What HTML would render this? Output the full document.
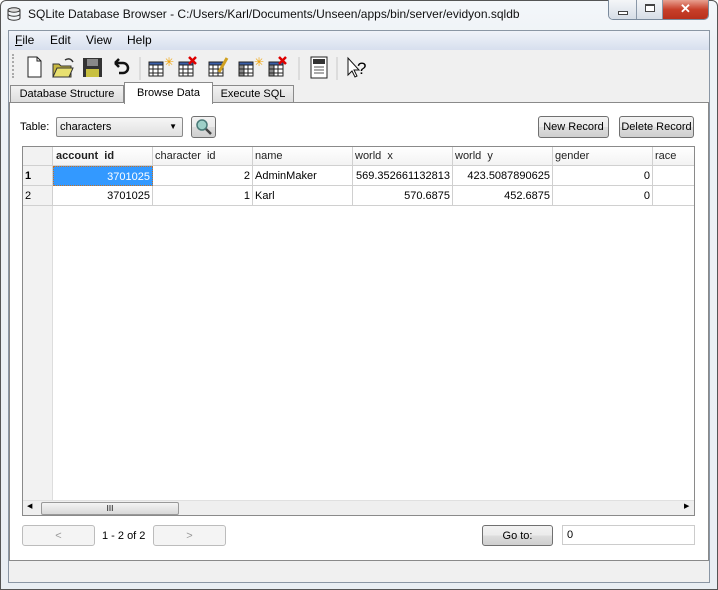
<!DOCTYPE html>
<html><head><style>
*{box-sizing:border-box;margin:0;padding:0}
body{width:718px;height:590px;overflow:hidden;font-family:"Liberation Sans",sans-serif;font-size:12px;color:#000;background:#fff;position:relative}
.abs{position:absolute}
.frame{left:0;top:0;width:718px;height:590px;background:linear-gradient(#f4f7fa,#eef2f6 40px,#e9eef3);border:1px solid #555;border-radius:6px 6px 0 0}
.btn{position:absolute;border:1px solid #707070;border-radius:3px;background:linear-gradient(#f2f2f2,#ebebeb 50%,#dddddd 51%,#cfcfcf);text-align:center;font-size:11px;line-height:20px}
.dis{border-color:#bcbcbc;background:#f4f4f4;color:#999}
.cell{position:absolute;height:20px;line-height:20px;font-size:11px;border-right:1px solid #d0d0d0;border-bottom:1px solid #d0d0d0;padding:0 2px;white-space:pre;overflow:hidden}
.hd{background:linear-gradient(#fff,#f3f3f3);color:#222;line-height:19px;height:19px}
.r{text-align:right}
</style></head><body>
<div class="abs frame"></div>
<div class="abs" style="left:7px;top:7px;width:14px;height:14px">
<svg width="14" height="14"><ellipse cx="7" cy="3" rx="6" ry="2.2" fill="#ddd" stroke="#333"/><path d="M1 3v8c0 1.2 2.7 2.2 6 2.2s6-1 6-2.2V3M1 7c0 1.2 2.7 2.2 6 2.2s6-1 6-2.2" fill="none" stroke="#333"/></svg></div>
<div class="abs" style="left:28px;top:7px;font-size:12px;color:#111">SQLite Database Browser - C:/Users/Karl/Documents/Unseen/apps/bin/server/evidyon.sqldb</div>
<div class="abs" style="left:608px;top:0;width:101px;height:20px;border:1px solid #7a8a9c;border-top:none;border-radius:0 0 5px 5px;overflow:hidden;display:flex">
<div style="width:28px;background:linear-gradient(#f4f6f8,#d6dde6);border-right:1px solid #8a98a8;position:relative"><div class="abs" style="left:9px;top:11px;width:10px;height:4px;border:1px solid #444;background:#fff"></div></div>
<div style="width:26px;background:linear-gradient(#f4f6f8,#d6dde6);border-right:1px solid #8a98a8;position:relative"><div class="abs" style="left:8px;top:4px;width:10px;height:8px;border:1px solid #444;border-top-width:2px;background:#fff"></div></div>
<div style="flex:1;background:linear-gradient(#e8a090,#c8402a 50%,#b8301c);color:#fff;font-weight:bold;text-align:center;font-size:13px;line-height:18px">✕</div></div>
<div class="abs" style="left:8px;top:30px;width:702px;height:553px;background:#f0f0f0;border:1px solid #8a96a4"></div>
<div class="abs" style="left:9px;top:31px;width:700px;height:19px;background:linear-gradient(#f0f3f9,#d7dfee);font-size:12px;line-height:19px">
<span style="position:absolute;left:6px"><u>F</u>ile</span><span style="position:absolute;left:41px">Edit</span><span style="position:absolute;left:77px">View</span><span style="position:absolute;left:118px">Help</span></div>
<div class="abs" style="left:9px;top:50px;width:700px;height:33px;background:#f0f0f0">
<div class="abs" style="left:3px;top:4px;width:2px;height:24px;border-left:2px dotted #aaa"></div>
<svg class="abs" style="left:14px;top:4px" width="360" height="26">
<path d="M5 3h9l4 4v16H5z" fill="#fff" stroke="#222"/><path d="M14 3v4h4" fill="none" stroke="#222"/>
<path d="M30 10h6l2 2h10v11H30z" fill="#c8b840" stroke="#333"/><path d="M30 23l4-9h16l-4 9z" fill="#e8e070" stroke="#333"/><path d="M42 6q5-3 8 2" fill="none" stroke="#333" stroke-width="1.5"/>
<rect x="60" y="4" width="19" height="19" fill="#333"/><rect x="64" y="5" width="11" height="7" fill="#888"/><rect x="63" y="15" width="13" height="8" fill="#c8c040"/>
<path d="M92 9h8a5 5 0 010 10h-4M92 9l4-4M92 9l4 4" fill="none" stroke="#111" stroke-width="2.5"/>
<g transform="translate(124,0)" fill="none" stroke="#222"><rect x="2" y="8" width="14" height="14" fill="#fff"/><path d="M2 11h14M2 15h14M2 19h14M6 8v14M11 8v14"/><rect x="2" y="8" width="14" height="3" fill="#3a5fa8"/></g>
<text x="141" y="12" font-size="12" fill="#f0a000" font-family="Liberation Sans">✳</text>
<g transform="translate(154,0)" fill="none" stroke="#222"><rect x="2" y="8" width="14" height="14" fill="#fff"/><path d="M2 15h14M2 19h14M6 8v14M11 8v14"/><rect x="2" y="8" width="14" height="3" fill="#3a5fa8"/><path d="M12 3l7 7M19 3l-7 7" stroke="#d00" stroke-width="2.5"/></g>
<g transform="translate(184,0)" fill="none" stroke="#222"><rect x="2" y="8" width="14" height="14" fill="#fff"/><path d="M2 15h14M2 19h14M6 8v14M11 8v14"/><rect x="2" y="8" width="14" height="3" fill="#3a5fa8"/><path d="M12 18l8-14" stroke="#d0a020" stroke-width="3"/></g>
<g transform="translate(214,0)" fill="none" stroke="#222"><rect x="2" y="8" width="14" height="14" fill="#fff"/><rect x="2" y="8" width="5" height="14" fill="#888"/><path d="M2 15h14M2 19h14M11 8v14"/><rect x="2" y="8" width="14" height="3" fill="#3a5fa8"/></g>
<text x="231" y="12" font-size="12" fill="#f0a000" font-family="Liberation Sans">✳</text>
<g transform="translate(244,0)" fill="none" stroke="#222"><rect x="2" y="8" width="14" height="14" fill="#fff"/><rect x="2" y="8" width="5" height="14" fill="#888"/><path d="M2 15h14M2 19h14M11 8v14"/><rect x="2" y="8" width="14" height="3" fill="#3a5fa8"/><path d="M12 3l7 7M19 3l-7 7" stroke="#d00" stroke-width="2.5"/></g>
<path d="M117 3v24M276 3v24M314 3v24" stroke="#c8c8c8"/>
<rect x="288" y="3" width="16" height="21" fill="#fff" stroke="#222"/><rect x="290" y="5" width="12" height="5" fill="#333"/><path d="M291 13h10M291 16h10M291 19h10" stroke="#555"/>
<path d="M325 4v17l4-4 3 6 2-1-3-6h5z" fill="#fff" stroke="#111"/><text x="334" y="20" font-size="17" font-family="Liberation Sans">?</text>
</svg></div>
<div class="abs" style="left:10px;top:85px;width:114px;height:18px;border:1px solid #8a8a8a;border-bottom:none;background:linear-gradient(#f2f2f2,#dcdcdc);font-size:11px;line-height:17px;text-align:center">Database Structure</div>
<div class="abs" style="left:212px;top:85px;width:82px;height:18px;border:1px solid #8a8a8a;border-bottom:none;background:linear-gradient(#f2f2f2,#dcdcdc);font-size:11px;line-height:17px;text-align:center">Execute SQL</div>
<div class="abs" style="left:9px;top:102px;width:700px;height:459px;background:#fff;border:1px solid #8a8a8a"></div>
<div class="abs" style="left:124px;top:82px;width:89px;height:22px;border:1px solid #8a8a8a;border-bottom:none;background:#fff;font-size:11px;line-height:20px;text-align:center">Browse Data</div>
<div class="abs" style="left:20px;top:121px;font-size:11px">Table:</div>
<div class="abs" style="left:56px;top:117px;width:127px;height:20px;border:1px solid #8a8a8a;border-radius:2px;background:linear-gradient(#f6f6f6,#e0e0e0);font-size:11px;line-height:18px;padding-left:3px">characters<span style="position:absolute;right:5px;top:0;font-size:8px">▼</span></div>
<div class="btn" style="left:191px;top:116px;width:25px;height:22px"><svg width="22" height="20"><circle cx="9" cy="8" r="5" fill="#9ed0c8" stroke="#4a7a78" stroke-width="1.5"/><path d="M13 12l5 5" stroke="#444" stroke-width="2.5"/></svg></div>
<div class="btn" style="left:538px;top:116px;width:71px;height:22px">New Record</div>
<div class="btn" style="left:619px;top:116px;width:75px;height:22px">Delete Record</div>
<div class="abs" style="left:22px;top:146px;width:673px;height:370px;border:1px solid #8a8a8a;background:#fff;overflow:hidden">
<div class="abs" style="left:0;top:0;width:30px;height:368px;background:#f2f2f2;border-right:1px solid #ddd"></div>
<div class="cell hd" style="left:0;top:0;width:30px;background:#f2f2f2"></div>
<div class="cell hd" style="left:30px;top:0;width:100px;font-weight:bold;padding-left:3px">account  id</div>
<div class="cell hd" style="left:130px;top:0;width:100px">character  id</div>
<div class="cell hd" style="left:230px;top:0;width:100px">name</div>
<div class="cell hd" style="left:330px;top:0;width:100px">world  x</div>
<div class="cell hd" style="left:430px;top:0;width:100px">world  y</div>
<div class="cell hd" style="left:530px;top:0;width:100px">gender</div>
<div class="cell hd" style="left:630px;top:0;width:50px">race</div>
<div class="cell" style="left:0;top:19px;width:30px;background:#f2f2f2;font-weight:bold">1</div>
<div class="cell r" style="left:30px;top:19px;width:100px;background:#3399ff;color:#fff;border:1px dotted #c87020">3701025</div>
<div class="cell r" style="left:130px;top:19px;width:100px">2</div>
<div class="cell" style="left:230px;top:19px;width:100px">AdminMaker</div>
<div class="cell r" style="left:330px;top:19px;width:100px">569.352661132813</div>
<div class="cell r" style="left:430px;top:19px;width:100px">423.5087890625</div>
<div class="cell r" style="left:530px;top:19px;width:100px">0</div>
<div class="cell" style="left:630px;top:19px;width:50px"></div>
<div class="cell" style="left:0;top:39px;width:30px;background:#f2f2f2">2</div>
<div class="cell r" style="left:30px;top:39px;width:100px">3701025</div>
<div class="cell r" style="left:130px;top:39px;width:100px">1</div>
<div class="cell" style="left:230px;top:39px;width:100px">Karl</div>
<div class="cell r" style="left:330px;top:39px;width:100px">570.6875</div>
<div class="cell r" style="left:430px;top:39px;width:100px">452.6875</div>
<div class="cell r" style="left:530px;top:39px;width:100px">0</div>
<div class="cell" style="left:630px;top:39px;width:50px"></div>
<div class="abs" style="left:0;top:353px;width:671px;height:15px;background:#efefef;border-top:1px solid #e0e0e0">
<span class="abs" style="left:4px;top:1px;font-size:7px">◀</span>
<div class="abs" style="left:18px;top:1px;width:138px;height:13px;border:1px solid #999;border-radius:2px;background:linear-gradient(#f4f4f4,#d8d8d8);font-size:8px;text-align:center;line-height:11px">III</div>
<span class="abs" style="left:661px;top:1px;font-size:7px">▶</span></div>
</div>
<div class="btn dis" style="left:22px;top:525px;width:73px;height:21px">&lt;</div>
<div class="abs" style="left:102px;top:530px;font-size:11px">1 - 2 of 2</div>
<div class="btn dis" style="left:153px;top:525px;width:73px;height:21px">&gt;</div>
<div class="btn" style="left:482px;top:525px;width:71px;height:21px">Go to:</div>
<div class="abs" style="left:562px;top:525px;width:133px;height:20px;border:1px solid #ccc;font-size:11px;line-height:18px;padding-left:4px">0</div>
</body></html>
